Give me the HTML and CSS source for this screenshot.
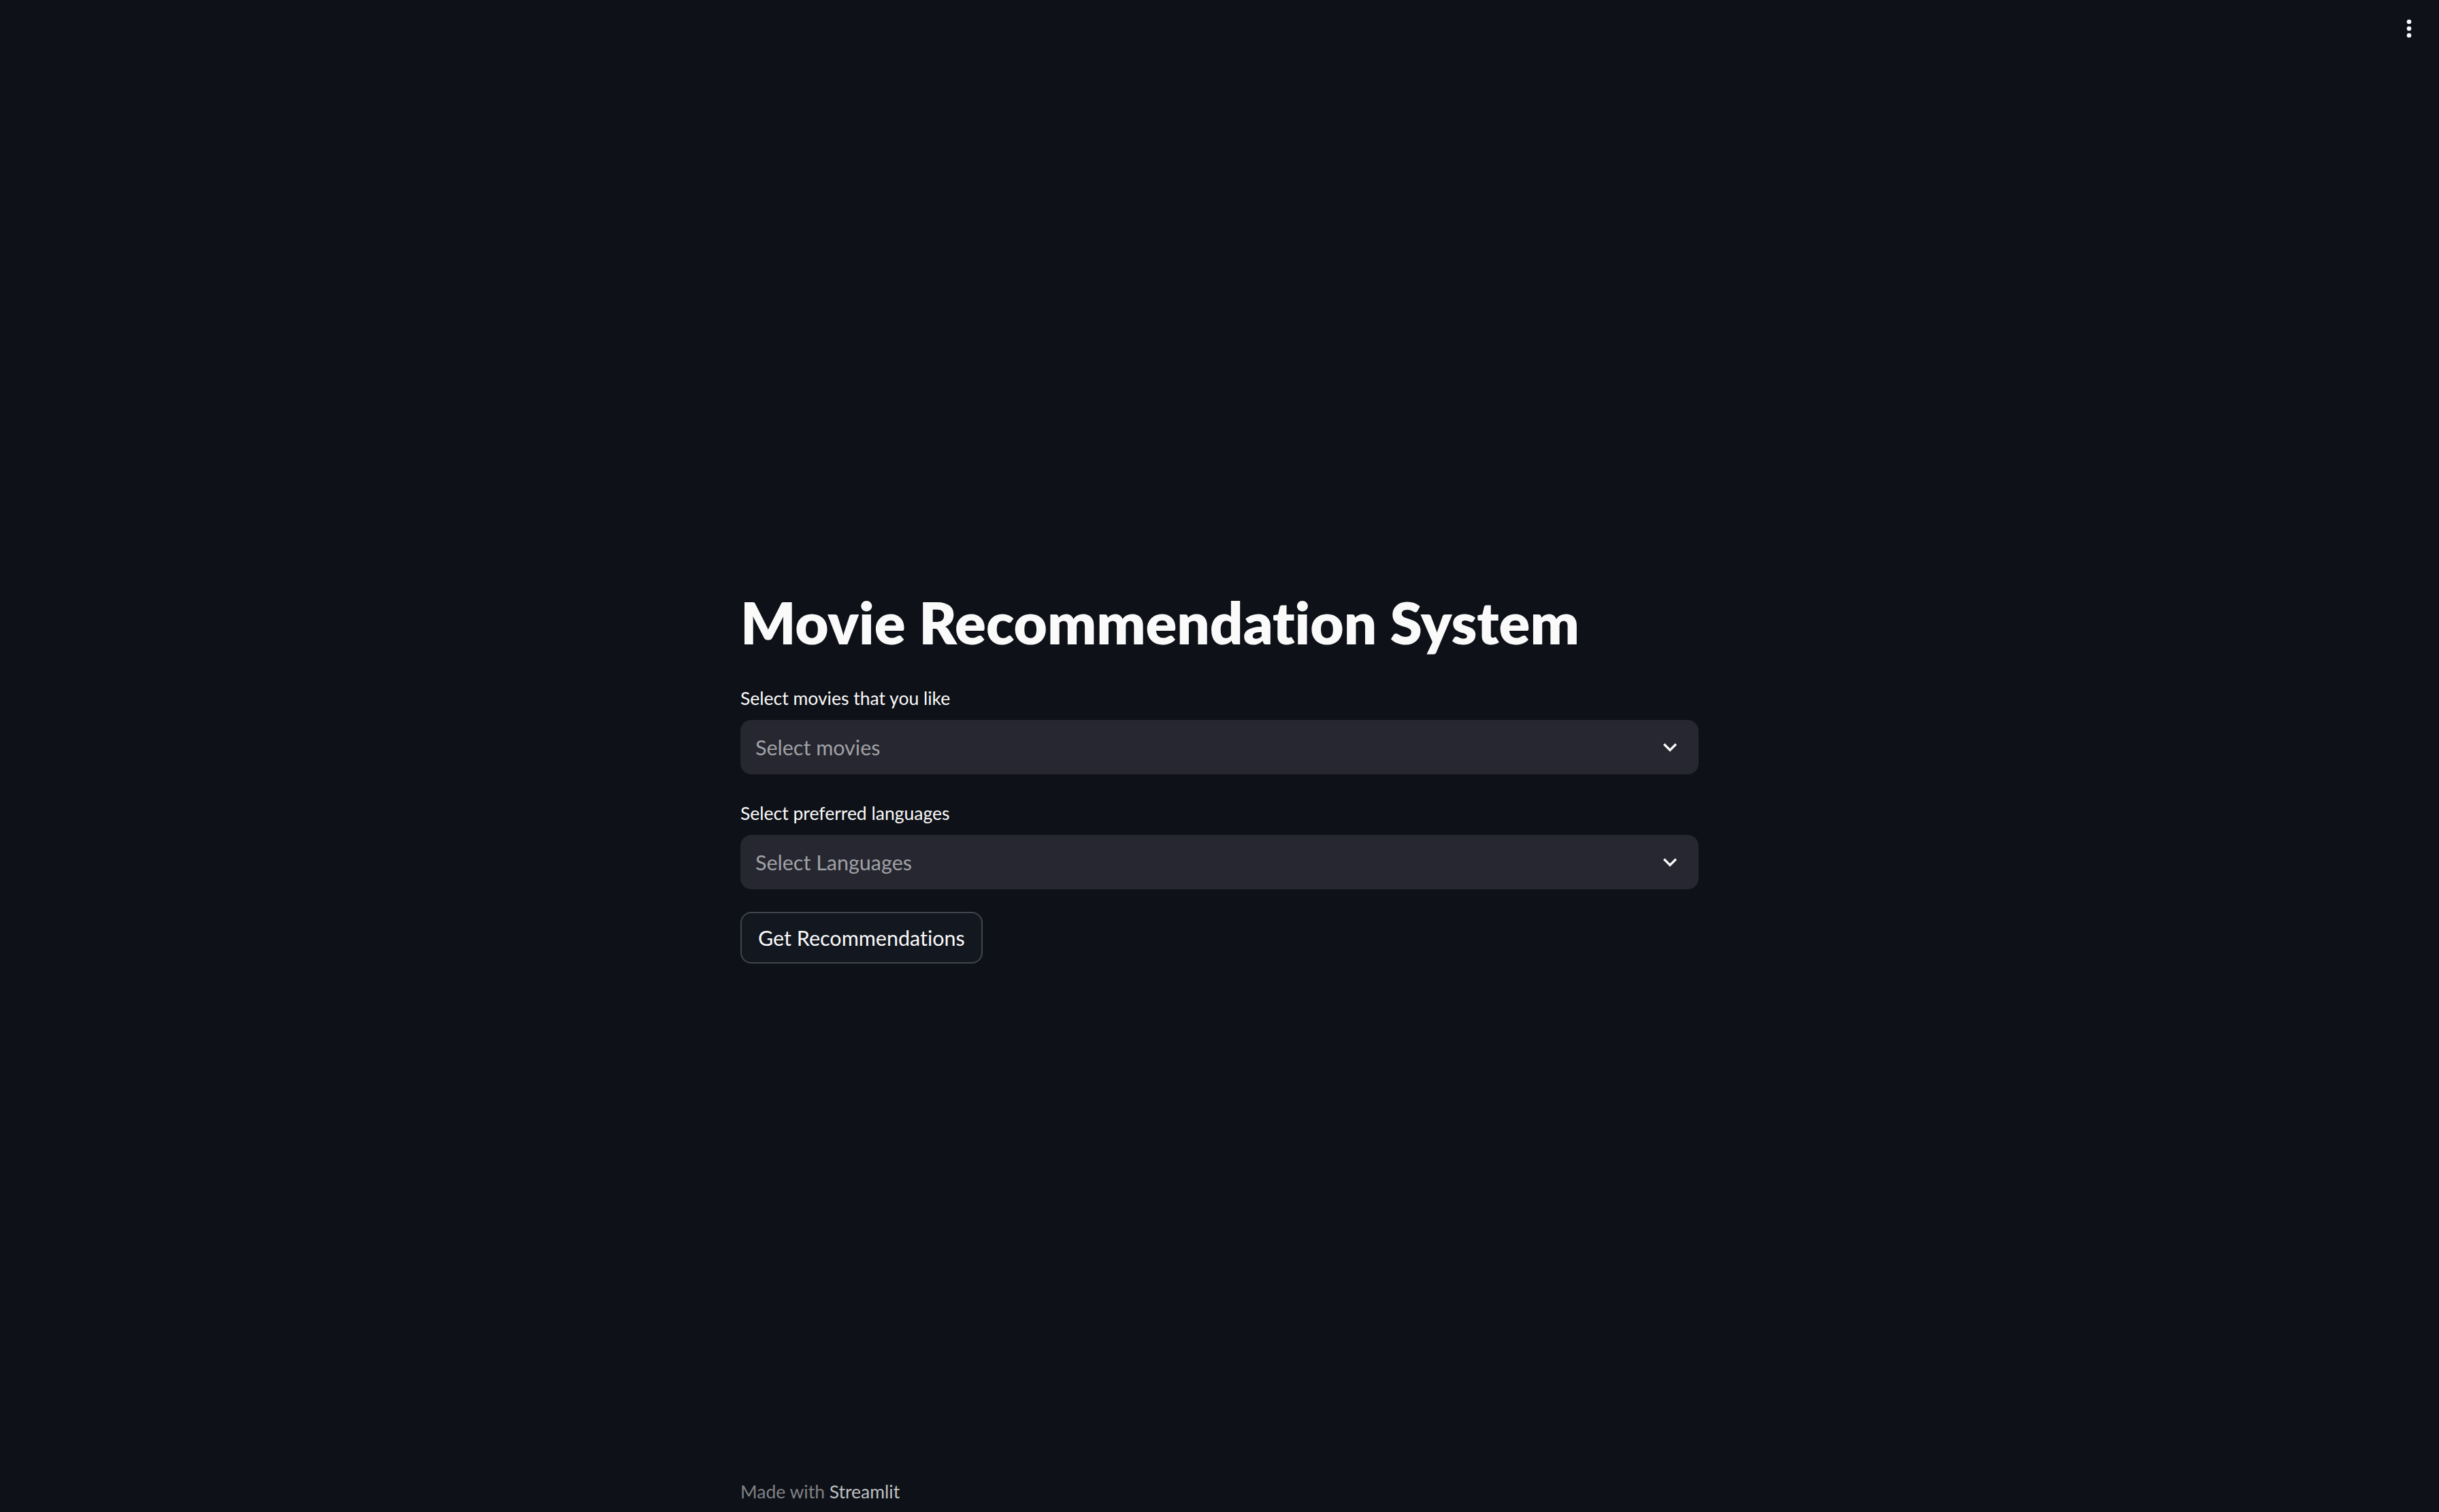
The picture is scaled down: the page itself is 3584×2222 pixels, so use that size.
FILE: index.html
```html
<!DOCTYPE html>
<html lang="en">
<head>
<meta charset="utf-8">
<title>Movie Recommendation System</title>
<link rel="stylesheet" href="styles.css">
</head>
<body>
<header class="toolbar">
  <button class="menu-btn" aria-label="Main menu">
    <svg width="40" height="40" viewBox="0 0 24 24" fill="#fafafa"><circle cx="12" cy="6" r="2"/><circle cx="12" cy="12" r="2"/><circle cx="12" cy="18" r="2"/></svg>
  </button>
</header>
<main class="main">
  <h1 class="title">Movie Recommendation System</h1>
  <div class="widget">
    <label class="label">Select movies that you like</label>
    <div class="select">
      <span class="placeholder">Select movies</span>
      <svg class="chevron" width="40" height="40" viewBox="0 0 24 24" fill="#fafafa"><path d="M16.59 8.59L12 13.17 7.41 8.59 6 10l6 6 6-6z"/></svg>
    </div>
  </div>
  <div class="widget">
    <label class="label">Select preferred languages</label>
    <div class="select">
      <span class="placeholder">Select Languages</span>
      <svg class="chevron" width="40" height="40" viewBox="0 0 24 24" fill="#fafafa"><path d="M16.59 8.59L12 13.17 7.41 8.59 6 10l6 6 6-6z"/></svg>
    </div>
  </div>
  <div class="widget">
    <button class="btn">Get Recommendations</button>
  </div>
</main>
<footer class="footer">Made with <span class="brand">Streamlit</span></footer>
</body>
</html>
```
FILE: styles.css
```css
html, body {
  margin: 0;
  padding: 0;
  background: #0e1117;
}
body {
  min-height: 100vh;
  display: flex;
  flex-direction: column;
  font-family: Lato, "Noto Sans", sans-serif;
  font-variant-ligatures: no-common-ligatures;
  color: #fafafa;
}
.toolbar {
  height: 84px;
  display: flex;
  justify-content: flex-end;
  align-items: center;
  padding-right: 24px;
}
.menu-btn {
  background: none;
  border: 0;
  padding: 0;
  width: 40px;
  height: 40px;
  display: flex;
}
.main {
  width: 1408px;
  margin: 0 auto;
  padding-top: 779px;
  display: flex;
  flex-direction: column;
  gap: 33px;
}
.title {
  margin: 0 0 4px 0;
  font-size: 85px;
  font-weight: 800;
  line-height: 1.2;
  color: #fafafa;
  font-variant-ligatures: none;
}
.widget {
  display: flex;
  flex-direction: column;
  align-items: flex-start;
}
.label {
  display: block;
  height: 48px;
  line-height: 48px;
  font-size: 26.5px;
  margin-bottom: 8px;
  color: #fafafa;
}
.select {
  align-self: stretch;
  height: 80px;
  box-sizing: border-box;
  background: #262730;
  border-radius: 16px;
  display: flex;
  align-items: center;
  justify-content: space-between;
  padding: 0 22px 0 22px;
}
.placeholder {
  font-size: 30.5px;
  line-height: 1.2;
  color: #a0a1a6;
}
.chevron {
  flex: none;
}
.btn {
  height: 76px;
  box-sizing: border-box;
  padding: 0 24px;
  background: #131720;
  border: 2px solid rgba(250, 250, 250, 0.2);
  border-radius: 16px;
  font-family: Lato, "Noto Sans", sans-serif;
  font-variant-ligatures: none;
  font-size: 30.5px;
  line-height: 1.2;
  color: #fafafa;
}
.footer {
  margin-top: auto;
  width: 1408px;
  margin-left: auto;
  margin-right: auto;
  padding-bottom: 9px;
  font-size: 26.5px;
  line-height: 1.6;
  color: #808186;
}
.brand {
  color: #bfc0c3;
}
```
